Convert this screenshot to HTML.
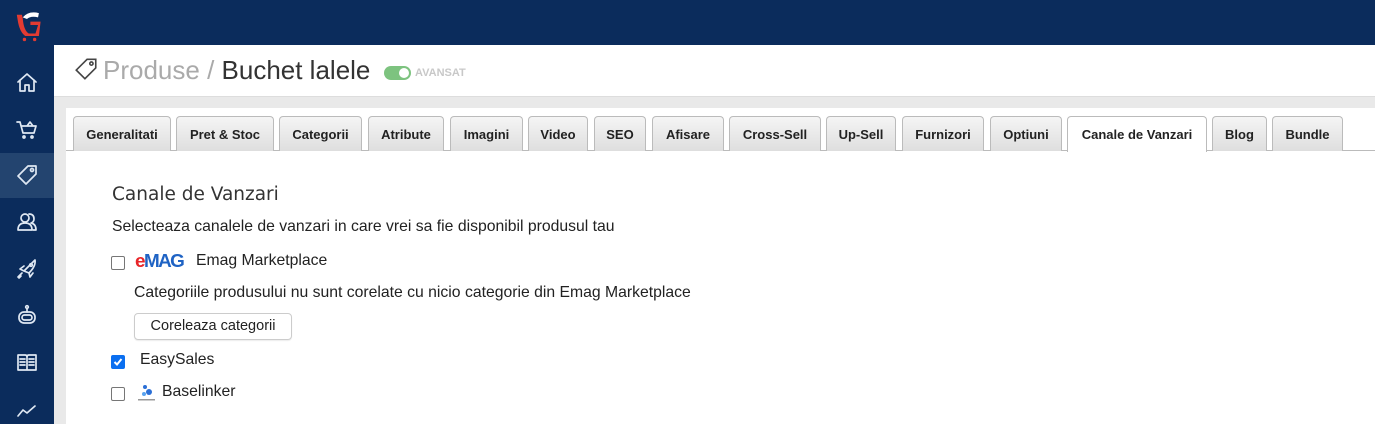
<!DOCTYPE html>
<html><head><meta charset="utf-8"><style>
*{margin:0;padding:0;box-sizing:border-box}
body{width:1375px;height:424px;overflow:hidden;background:#e9e9e9;font-family:"Liberation Sans",Arial,sans-serif;position:relative}
.top{position:absolute;left:0;top:0;width:1375px;height:45px;background:#0b2c5c}
.side{position:absolute;left:0;top:0;width:54px;height:424px;background:#0b2c5c}
.act{position:absolute;left:0;top:153px;width:54px;height:45px;background:#23446f}
.side svg{position:absolute;left:15px;width:24px;height:24px;fill:none;stroke:#dfe8f3;stroke-width:1.7;stroke-linecap:round;stroke-linejoin:round}
.hdr{position:absolute;left:54px;top:45px;width:1321px;height:52px;background:#fff;border-bottom:1px solid #ddd}
.title{position:absolute;left:103px;top:55px;font-size:26px;color:#aaa;font-weight:normal;white-space:nowrap}
.title b{font-weight:normal;color:#333}
.tog{position:absolute;left:384px;top:66px;width:27px;height:14px;border-radius:7px;background:#7dc37f}
.tog:after{content:"";position:absolute;right:2px;top:2px;width:10px;height:10px;border-radius:50%;background:#fff}
.av{position:absolute;left:415px;top:67px;font-size:11px;font-weight:bold;color:#c8c8c8}
.panel{position:absolute;left:66px;top:108px;width:1309px;height:316px;background:#fff}
.tabs{position:absolute;left:66px;top:150px;width:1309px;height:1px;background:#bbb}
.tab{position:absolute;top:116px;height:35px;border:1px solid #bbb;border-bottom:none;border-radius:4px 4px 0 0;background:linear-gradient(#f5f5f5,#dedede);font-size:13px;font-weight:bold;color:#222;text-align:center;line-height:36px}
.tab.on{background:#fff;height:36px}
.t{position:absolute;white-space:nowrap;color:#222}
.cb{position:absolute;left:111px;width:14px;height:14px;border:1px solid #767676;border-radius:2px;background:#fff}
.cb.on{background:#0b6ff0;border-color:#0b6ff0}
.btn{position:absolute;left:134px;top:313px;width:158px;height:27px;border:1px solid #ccc;border-radius:4px;font-size:14.5px;line-height:25px;text-align:center;color:#222;box-shadow:0 1px 1px rgba(0,0,0,.08)}
</style></head><body>
<div class="top"></div>
<div class="side">
<svg viewBox="0 0 40 40" style="left:10px;top:8px;width:34px;height:34px;stroke:none"><path d="M8 8 L14 8 L15 12 Q16 26 22 30 L30 30 L33 20 L24 20 L24 16 L36 16 L34 33 L18 33 Q11 28 9 14Z" fill="#e23b32"/><path d="M15 11 Q22 3 34 6 L33 11 Q24 9 20 13Z" fill="#fff"/><circle cx="17" cy="37" r="2" fill="#e23b32"/><circle cx="29" cy="37" r="2" fill="#e23b32"/></svg>
<div class="act"></div>
<svg viewBox="0 0 24 24" style="top:71px"><path d="M3 11 L12 3 L21 11 M5 9 V20 H10 V14 H14 V20 H19 V9"/></svg>
<svg viewBox="0 0 24 24" style="top:117px"><path d="M2 5 H5 L8 16 H19 L21 9 H7 M12 9 L15 5 L18 9"/><circle cx="9" cy="20" r="1"/><circle cx="17" cy="20" r="1"/></svg>
<svg viewBox="0 0 24 24" style="top:163px"><path d="M13 3 H21 V11 L11 21 L3 13 Z"/><circle cx="17" cy="7" r="1.5"/></svg>
<svg viewBox="0 0 24 24" style="top:210px"><circle cx="10" cy="8" r="4"/><path d="M3 20 Q3 13 10 13 Q17 13 17 20 Z M14 4 Q19 4 19 9 Q19 12 16 13 Q21 14 21 20 H18"/></svg>
<svg viewBox="0 0 24 24" style="top:256px"><path d="M9 15 L20 4 Q21 10 14 17 Z M9 15 L5 13 L9 10 M14 17 L15 21 L18 17 M7 17 L3 21 M6 20 L4 22"/><circle cx="16" cy="9" r="1.3"/></svg>
<svg viewBox="0 0 24 24" style="top:303px"><rect x="4" y="9" width="16" height="11" rx="5"/><rect x="7" y="12" width="10" height="5" rx="2.5"/><path d="M12 9 V6"/><circle cx="12" cy="4" r="1.3"/></svg>
<svg viewBox="0 0 24 24" style="top:350px"><path d="M3 5 H10 Q12 5 12 7 Q12 5 14 5 H21 V20 H3 Z M12 7 V20 M5 9 H10 M5 12 H10 M5 15 H10 M14 9 H19 M14 12 H19 M14 15 H19"/></svg>
<svg viewBox="0 0 24 24" style="top:398px"><path d="M3 18 L8 12 L12 15 L20 8"/></svg>
</div>
<div class="hdr"></div>
<svg style="position:absolute;left:73px;top:56px" width="26" height="26" viewBox="0 0 24 24" fill="none" stroke="#444" stroke-width="1.5"><path d="M13 3 H21 V11 L11 21 L3 13 Z"/><circle cx="17" cy="7" r="1.5"/></svg>
<div class="title">Produse / <b>Buchet lalele</b></div>
<div class="tog"></div><div class="av">AVANSAT</div>
<div class="panel"></div>
<div class="tabs"></div>
<div class="tab" style="left:73px;width:98px">Generalitati</div>
<div class="tab" style="left:176px;width:98px">Pret &amp; Stoc</div>
<div class="tab" style="left:279px;width:83px">Categorii</div>
<div class="tab" style="left:368px;width:76px">Atribute</div>
<div class="tab" style="left:450px;width:73px">Imagini</div>
<div class="tab" style="left:528px;width:60px">Video</div>
<div class="tab" style="left:594px;width:52px">SEO</div>
<div class="tab" style="left:652px;width:72px">Afisare</div>
<div class="tab" style="left:729px;width:92px">Cross-Sell</div>
<div class="tab" style="left:826px;width:70px">Up-Sell</div>
<div class="tab" style="left:902px;width:82px">Furnizori</div>
<div class="tab" style="left:990px;width:72px">Optiuni</div>
<div class="tab on" style="left:1067px;width:140px">Canale de Vanzari</div>
<div class="tab" style="left:1212px;width:55px">Blog</div>
<div class="tab" style="left:1272px;width:71px">Bundle</div>
<div class="t" style="left:112px;top:184px;font-size:18.5px;font-family:'DejaVu Sans',sans-serif;color:#333">Canale de Vanzari</div>
<div class="t" style="left:112px;top:218px;font-size:15.75px">Selecteaza canalele de vanzari in care vrei sa fie disponibil produsul tau</div>
<div class="cb" style="top:256px"></div>
<div class="t" style="left:135px;top:251px;font-size:18px;font-weight:900;letter-spacing:-1.5px;transform:scaleX(1.05);transform-origin:left"><span style="color:#e8262a">e</span><span style="color:#1f63c4">MAG</span></div>
<div class="t" style="left:196px;top:252px;font-size:15.75px">Emag Marketplace</div>
<div class="t" style="left:134px;top:284px;font-size:15.75px">Categoriile produsului nu sunt corelate cu nicio categorie din Emag Marketplace</div>
<div class="btn">Coreleaza categorii</div>
<div class="cb on" style="top:355px"><svg width="12" height="12" viewBox="0 0 12 12" style="position:absolute;left:0;top:0"><path d="M2.5 6 L5 8.5 L9.5 3" fill="none" stroke="#fff" stroke-width="2"/></svg></div>
<div class="t" style="left:140px;top:351px;font-size:15.75px">EasySales</div>
<div class="cb" style="top:387px"></div>
<svg style="position:absolute;left:137px;top:384px" width="20" height="18" viewBox="0 0 20 18"><circle cx="8" cy="3" r="2" fill="#2b6fd6"/><circle cx="12" cy="8" r="3" fill="#2b6fd6"/><circle cx="7" cy="10" r="2" fill="#5aa3ef"/><rect x="1" y="15" width="17" height="1.5" fill="#999"/></svg>
<div class="t" style="left:162px;top:383px;font-size:15.75px">Baselinker</div>
</body></html>
